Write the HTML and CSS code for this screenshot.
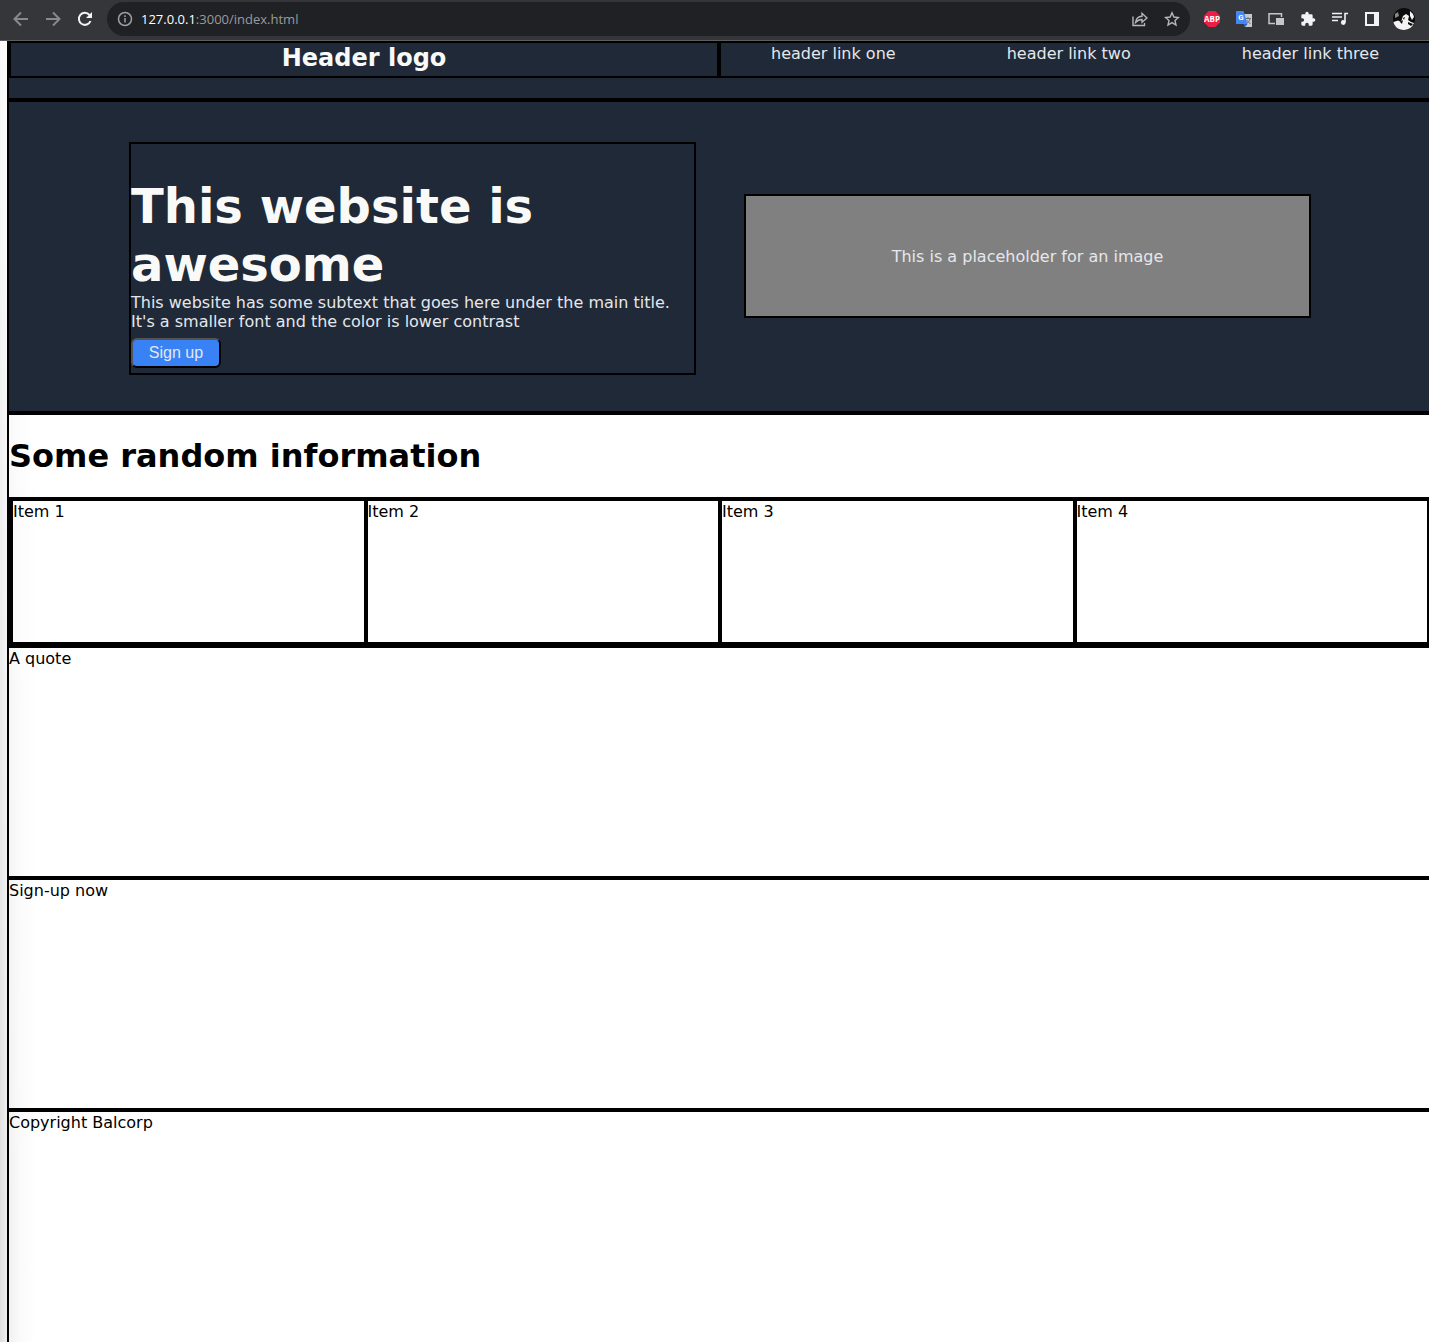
FILE: index.html
```html
<!DOCTYPE html>
<html lang="en">
<head>
<meta charset="utf-8">
<title>Landing page</title>
<link rel="stylesheet" href="styles.css">
</head>
<body>
<div class="toolbar">
  <button class="tool" aria-label="Back"><svg class="dim" viewBox="0 0 16 16"><path d="M15 8H2M8 1.5L1.5 8L8 14.5"/></svg></button>
  <button class="tool" aria-label="Forward"><svg class="dim" viewBox="0 0 16 16"><path d="M1 8H14M8 1.5L14.500 8L8 14.500"/></svg></button>
  <button class="tool" aria-label="Reload"><svg class="bright" viewBox="0 0 16 16"><path d="M13.500 10A6 6 0 1 1 12.500 4"/><path class="solid" d="M15 1V7H9z"/></svg></button>
  <div class="address">
    <svg class="info-icon" viewBox="0 0 16 16"><circle cx="8" cy="8" r="6.500"/><path d="M8 7V11.500M8 4.300V6"/></svg>
    <span class="url"><span class="host">127.0.0.1</span>:3000/index.html</span>
    <button class="tool" aria-label="Share"><svg class="share" viewBox="0 0 16 16"><path d="M1 5.500V14.500H12.500V12M3.500 11.500C4 7.500 6.500 5.500 10 5.300V2.300L15 7L10 11.300V8.500C7.500 8.500 5.500 9.300 3.500 11.500z"/></svg></button>
    <button class="tool" aria-label="Bookmark"><svg class="share" viewBox="0 0 16 16"><path d="M8 1.800L9.900 6L14.400 6.500L11 9.500L12 14L8 11.600L4 14L5 9.500L1.600 6.500L6.100 6z"/></svg></button>
  </div>
  <div class="extensions">
    <button class="tool" aria-label="Adblock Plus"><svg viewBox="0 0 16 16"><path fill="#ed1e45" d="M4.700 0H11.300L16 4.700V11.300L11.300 16H4.700L0 11.300V4.700z"/><text class="abp" x="8" y="10.800" text-anchor="middle">ABP</text></svg></button>
    <button class="tool" aria-label="Translate"><svg viewBox="0 0 16 16"><path fill="#c8cacc" d="M6 3H16V16H9z"/><path fill="none" stroke="#66707a" d="M9 7.500H15M12 6V7.500M14 8C13.500 10 12 11.500 10.500 12.500M10.500 9L14.500 13"/><path fill="#4587f0" d="M0 0H7.500L11.500 13H0z"/><path fill="#2c5fc4" d="M7.500 13H11.500L9 16z"/><text class="glyph" x="5" y="9" text-anchor="middle">G</text></svg></button>
    <button class="tool" aria-label="Picture in picture"><svg viewBox="0 0 16 16"><path fill="none" stroke="#c4c6c9" stroke-width="1.500" d="M7 12.500H1V2.800H13.500V6"/><path fill="#c4c6c9" d="M8 7H16V14H8z"/></svg></button>
    <button class="tool" aria-label="Extensions"><svg viewBox="0 0 24 24"><path fill="#f1f3f4" d="M20.500 11H19V7a2 2 0 0 0-2-2h-4V3.500a2.500 2.500 0 0 0-5 0V5H4a2 2 0 0 0-2 2v3.800h1.500a2.700 2.700 0 0 1 0 5.400H2V20a2 2 0 0 0 2 2h3.800v-1.500a2.700 2.700 0 0 1 5.400 0V22H17a2 2 0 0 0 2-2v-4h1.500a2.500 2.500 0 0 0 0-5z"/></svg></button>
    <button class="tool" aria-label="Media"><svg viewBox="0 0 16 16"><path fill="none" stroke="#f1f3f4" stroke-width="1.600" d="M0 2.500H10M0 6H10M0 9.500H6M13 11V2.500H16"/><circle cx="11.300" cy="11.500" r="2.400" fill="#f1f3f4"/></svg></button>
    <button class="tool" aria-label="Side panel"><svg viewBox="0 0 16 16"><path fill="#f1f3f4" fill-rule="evenodd" d="M1 1H15V15H1zM3 3V13H10V3z"/></svg></button>
    <button class="tool profile" aria-label="Profile"><svg viewBox="0 0 22 22"><circle cx="11" cy="11" r="11" fill="#0c0c0c"/><path fill="#f4f4f4" d="M0.500 14L5 12.500L8 14L10 8L13 6L16 8L15 12L18 14L21 15A11 11 0 0 1 1 16zM17 3Q20 5 21 9L19 12L17 8z"/><path fill="#888" d="M2 6L5 4L6 8L2 10z"/><path fill="#0c0c0c" d="M10 10L12 9L11 12zM7 14L10 12L9 16zM15 14L20 16L18 18L15 16z"/></svg></button>
  </div>
</div>
<div class="page">
  <header class="header">
    <div class="logo">Header logo</div>
    <nav class="links">
      <a href="#one">header link one</a>
      <a href="#two">header link two</a>
      <a href="#three">header link three</a>
    </nav>
  </header>
  <section class="hero">
    <div class="intro">
      <h1>This website is awesome</h1>
      <p>This website has some subtext that goes here under the main title. It's a smaller font and the color is lower contrast</p>
      <button class="signup">Sign up</button>
    </div>
    <div class="placeholder">This is a placeholder for an image</div>
  </section>
  <section class="information">
    <h2>Some random information</h2>
    <div class="items">
      <div class="item">Item 1</div>
      <div class="item">Item 2</div>
      <div class="item">Item 3</div>
      <div class="item">Item 4</div>
    </div>
  </section>
  <section class="block">A quote</section>
  <section class="block">Sign-up now</section>
  <footer class="block footer">Copyright Balcorp</footer>
</div>
</body>
</html>
```

FILE: styles.css
```css
* { box-sizing: border-box; }
body {
  margin: 0;
  font: 16px/19px Verdana, "DejaVu Sans", sans-serif;
  color: #000;
  background: #fff;
}
h1, h2, p { margin: 0; }

/* Browser toolbar */
.toolbar {
  display: flex;
  align-items: center;
  height: 41px;
  padding: 0 9px 2px 5px;
  background: #35363a;
  border-bottom: 1px solid #5d5e61;
}
.tool {
  display: flex;
  align-items: center;
  justify-content: center;
  width: 32px;
  height: 32px;
  padding: 0;
  border: 0;
  background: none;
}
.tool svg { width: 16px; height: 16px; }
.dim, .bright, .share, .info-icon { fill: none; stroke: #88898c; stroke-width: 2; }
.bright { stroke: #f1f3f4; }
.bright .solid { fill: #f1f3f4; stroke: none; }
.share { stroke: #b4b6b9; stroke-width: 1.4; }
.address {
  display: flex;
  flex: 1;
  align-items: center;
  height: 34px;
  margin-left: 6px;
  padding: 0 2px 0 10px;
  border-radius: 17px;
  background: #202124;
}
.info-icon { width: 16px; height: 16px; stroke: #9aa0a6; stroke-width: 1.5; }
.url {
  flex: 1;
  margin-left: 8px;
  font: 13px/18px "Open Sans", "Noto Sans", sans-serif;
  color: #9a9b9e;
}
.host { color: #fff; }
.extensions { display: flex; margin-left: 6px; }
.abp { font: bold 8px "Open Sans", sans-serif; fill: #fff; }
.glyph { font: bold 8px Roboto, sans-serif; fill: #fff; }
.toolbar .profile svg { width: 22px; height: 22px; }

/* Page */
.page {
  padding-left: 7px;
  background:
    linear-gradient(to bottom, rgba(255, 255, 255, 0.8), rgba(255, 255, 255, 0) 1200px),
    linear-gradient(to right, #dedede, #f0f0f0 8px, #fafafa 20px, #fff 36px);
}
.header, .hero, .information, .block { border-left: 2px solid #000; }
.header {
  display: grid;
  grid-template-columns: 1fr 1fr;
  padding-bottom: 20px;
  border-bottom: 2px solid #000;
  background: #1f2937;
}
.logo {
  padding: 1px 0 3px;
  border: 2px solid #000;
  font-size: 24px;
  font-weight: bold;
  line-height: 29px;
  text-align: center;
  color: #f9faf8;
}
.links {
  display: flex;
  justify-content: space-between;
  padding: 1px 50px 0;
  border: 2px solid #000;
  border-right: 0;
}
.links a { color: #e5e7eb; text-decoration: none; }
.hero {
  display: grid;
  grid-template-columns: 1fr 1fr;
  gap: 48px;
  align-items: center;
  padding: 40px 118px 36px 120px;
  border-top: 2px solid #000;
  border-bottom: 2px solid #000;
  background: #1f2937;
  color: #e5e7eb;
}
.intro { padding: 33px 0 5px; border: 2px solid #000; }
.intro h1 { font-size: 48px; line-height: 58px; color: #f9faf8; }
.signup {
  display: block;
  width: 90px;
  height: 30px;
  margin-top: 7px;
  padding: 0;
  border: 2px outset #000;
  border-radius: 6px;
  background: #3882f6;
  color: #e5e7eb;
  font: 16px "Liberation Sans", Arial, sans-serif;
}
.placeholder {
  margin-bottom: 5px;
  padding: 51px 0 50px;
  border: 2px solid #000;
  background: #808080;
  text-align: center;
}
.information { border-top: 2px solid #000; }
.information h2 { padding: 21px 0; font-size: 32px; line-height: 40px; }
.items { display: grid; grid-template-columns: repeat(4, 1fr); border: 2px solid #000; border-right: 0; }
.item { min-height: 145px; padding-top: 1px; border: 2px solid #000; }
.block { min-height: 232px; padding-top: 1px; border-top: 2px solid #000; border-bottom: 2px solid #000; }
.footer { border-bottom: 0; }
```
